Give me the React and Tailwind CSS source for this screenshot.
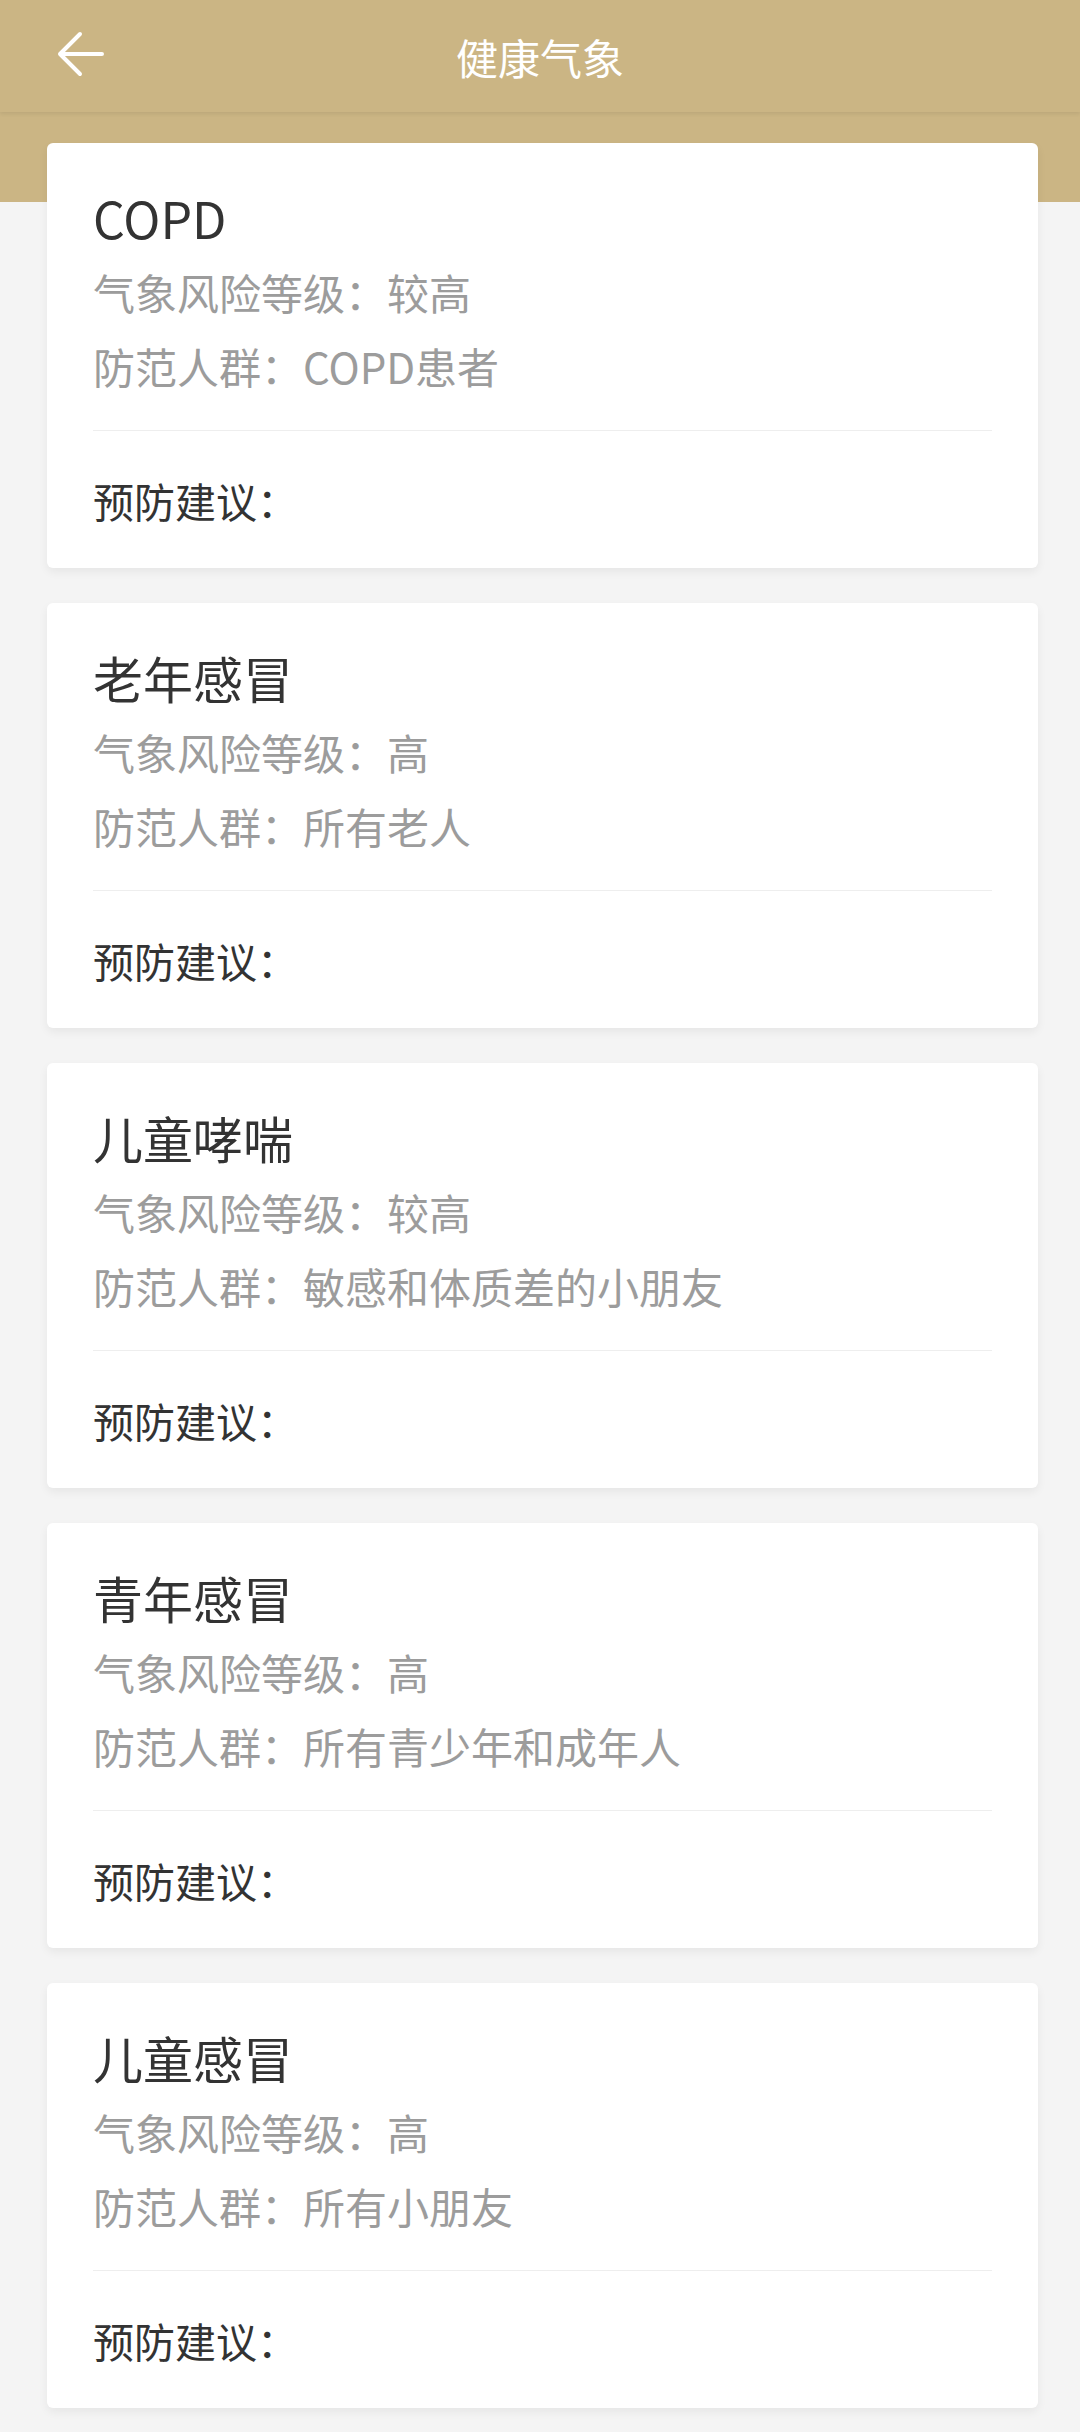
const CARDS = [
	{ name: "COPD", level: "较高", group: "COPD患者" },
	{ name: "老年感冒", level: "高", group: "所有老人" },
	{ name: "儿童哮喘", level: "较高", group: "敏感和体质差的小朋友" },
	{ name: "青年感冒", level: "高", group: "所有青少年和成年人" },
	{ name: "儿童感冒", level: "高", group: "所有小朋友" },
];

function BackArrow() {
	return (
		<svg width="48" height="48" viewBox="0 0 48 48" fill="none" stroke="white" strokeWidth={4} strokeLinecap="round" strokeLinejoin="round">
			<path d="M45 24H3M3 24L23 4M3 24L23 44" />
		</svg>
	);
}

function RiskCard({ name, level, group }) {
	return (
		<div className="h-[425px] rounded-[6px] bg-white px-[46px] pt-[44px] shadow-[0_4px_10px_rgba(0,0,0,0.06)]">
			<div className="text-[50px] leading-[60px] text-[#333333]">{name}</div>
			<div className="mt-[8px] text-[42px] leading-[74px] text-[#9c9c9c]">
				<p>气象风险等级：{level}</p>
				<p>防范人群：{group}</p>
			</div>
			<div className="mt-[27px] h-px bg-[#eeeeee]" />
			<div className="mt-[32px] text-[41px] leading-[74px] text-[#333333]">预防建议：</div>
		</div>
	);
}

export default function App() {
	return (
		<div className="min-h-screen bg-[#f4f4f4] font-['Noto_Sans_CJK_SC',sans-serif]">
			{/* Header */}
			<header className="relative z-10 flex h-[112px] items-center justify-center bg-[#cbb584] shadow-[0_2px_4px_rgba(0,0,0,0.08)]">
				<div className="absolute left-[57px] top-[30px]">
					<BackArrow />
				</div>
				<h1 className="text-[42px] text-white">健康气象</h1>
			</header>

			{/* Cards */}
			<div className="bg-[linear-gradient(#cbb584_90px,#f4f4f4_90px)] pl-[47px] pr-[42px] pt-[31px] pb-[28px]">
				<div className="flex flex-col gap-[35px]">
					{CARDS.map((c) => (
						<RiskCard key={c.name} {...c} />
					))}
				</div>
			</div>
		</div>
	);
}
